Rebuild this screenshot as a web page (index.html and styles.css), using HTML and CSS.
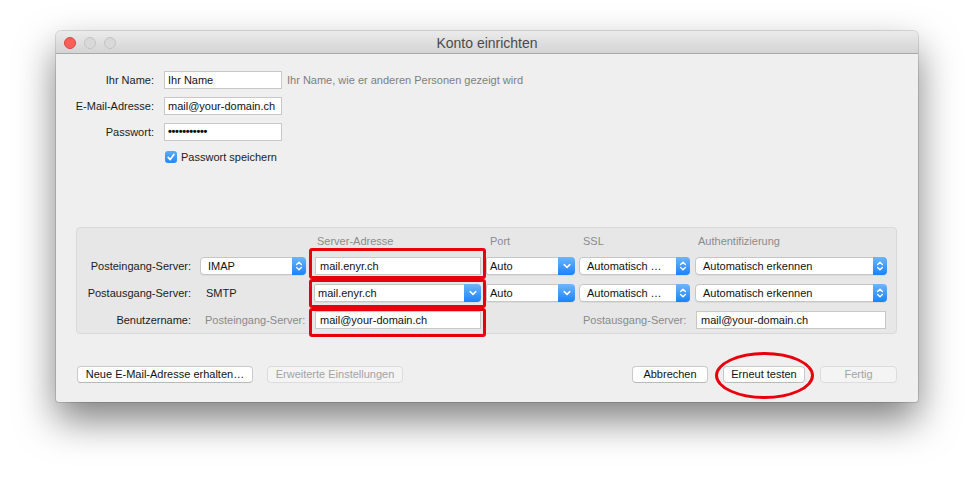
FILE: index.html
```html
<!DOCTYPE html>
<html lang="de">
<head>
<meta charset="utf-8">
<title>Konto einrichten</title>
<link rel="stylesheet" href="styles.css">
</head>
<body>
<div class="window">
  <div class="titlebar">
    <div class="lights"><span class="light close"></span><span class="light"></span><span class="light"></span></div>
    <div class="title">Konto einrichten</div>
  </div>
  <div class="content">
    <div class="account">
      <div class="lbl">Ihr Name:</div><div class="field">Ihr Name</div><div class="hint">Ihr Name, wie er anderen Personen gezeigt wird</div>
      <div class="lbl">E-Mail-Adresse:</div><div class="field">mail@your-domain.ch</div><div></div>
      <div class="lbl">Passwort:</div><div class="field pw">•••••••••••</div><div></div>
      <div></div>
      <div class="check"><span class="box"><svg viewBox="0 0 12 12" width="12" height="12"><path d="M3.2 6.4 L5.2 8.6 L8.9 3.4" fill="none" stroke="#fff" stroke-width="1.7" stroke-linecap="round" stroke-linejoin="round"/></svg></span>Passwort speichern</div>
      <div></div>
    </div>

    <div class="servers">
      <div class="grid">
        <div></div><div></div>
        <div class="head c3">Server-Adresse</div>
        <div class="head c4">Port</div>
        <div class="head c5">SSL</div>
        <div class="head c6">Authentifizierung</div>

        <div class="rlbl">Posteingang-Server:</div>
        <div class="popup proto"><span class="pv">IMAP</span><span class="pb"><svg viewBox="0 0 8 12" width="8" height="12"><path d="M1.6 4.6 L4 2.2 L6.4 4.6 M1.6 7.4 L4 9.8 L6.4 7.4" fill="none" stroke="#fff" stroke-width="1.4" stroke-linecap="round" stroke-linejoin="round"/></svg></span></div>
        <div class="tfield server">mail.enyr.ch</div>
        <div class="combo port"><span class="pv">Auto</span><span class="cb"><svg viewBox="0 0 10 8" width="10" height="8"><path d="M2.2 2.6 L5 5.4 L7.8 2.6" fill="none" stroke="#fff" stroke-width="1.5" stroke-linecap="round" stroke-linejoin="round"/></svg></span></div>
        <div class="popup ssl"><span class="pv">Automatisch …</span><span class="pb"><svg viewBox="0 0 8 12" width="8" height="12"><path d="M1.6 4.6 L4 2.2 L6.4 4.6 M1.6 7.4 L4 9.8 L6.4 7.4" fill="none" stroke="#fff" stroke-width="1.4" stroke-linecap="round" stroke-linejoin="round"/></svg></span></div>
        <div class="popup auth"><span class="pv">Automatisch erkennen</span><span class="pb"><svg viewBox="0 0 8 12" width="8" height="12"><path d="M1.6 4.6 L4 2.2 L6.4 4.6 M1.6 7.4 L4 9.8 L6.4 7.4" fill="none" stroke="#fff" stroke-width="1.4" stroke-linecap="round" stroke-linejoin="round"/></svg></span></div>

        <div class="rlbl">Postausgang-Server:</div>
        <div class="plain">SMTP</div>
        <div class="combo server"><span class="pv">mail.enyr.ch</span><span class="cb"><svg viewBox="0 0 10 8" width="10" height="8"><path d="M2.2 2.6 L5 5.4 L7.8 2.6" fill="none" stroke="#fff" stroke-width="1.5" stroke-linecap="round" stroke-linejoin="round"/></svg></span></div>
        <div class="combo port"><span class="pv">Auto</span><span class="cb"><svg viewBox="0 0 10 8" width="10" height="8"><path d="M2.2 2.6 L5 5.4 L7.8 2.6" fill="none" stroke="#fff" stroke-width="1.5" stroke-linecap="round" stroke-linejoin="round"/></svg></span></div>
        <div class="popup ssl"><span class="pv">Automatisch …</span><span class="pb"><svg viewBox="0 0 8 12" width="8" height="12"><path d="M1.6 4.6 L4 2.2 L6.4 4.6 M1.6 7.4 L4 9.8 L6.4 7.4" fill="none" stroke="#fff" stroke-width="1.4" stroke-linecap="round" stroke-linejoin="round"/></svg></span></div>
        <div class="popup auth"><span class="pv">Automatisch erkennen</span><span class="pb"><svg viewBox="0 0 8 12" width="8" height="12"><path d="M1.6 4.6 L4 2.2 L6.4 4.6 M1.6 7.4 L4 9.8 L6.4 7.4" fill="none" stroke="#fff" stroke-width="1.4" stroke-linecap="round" stroke-linejoin="round"/></svg></span></div>

        <div class="rlbl">Benutzername:</div>
        <div class="plain gray">Posteingang-Server:</div>
        <div class="tfield server">mail@your-domain.ch</div>
        <div></div>
        <div class="plain gray out">Postausgang-Server:</div>
        <div class="tfield user2">mail@your-domain.ch</div>
      </div>
      <div class="mark m1"></div>
      <div class="mark m2"></div>
      <div class="mark m3"></div>
    </div>

    <div class="buttons">
      <div class="bgroup">
        <div class="btn b-new">Neue E-Mail-Adresse erhalten…</div>
        <div class="btn dis b-adv">Erweiterte Einstellungen</div>
      </div>
      <div class="bgroup">
        <div class="btn b-cancel">Abbrechen</div>
        <div class="btn b-test">Erneut testen</div>
        <div class="btn dis b-done">Fertig</div>
      </div>
    </div>
  </div>
  <div class="ellipse"></div>
</div>
</body>
</html>
```

FILE: styles.css
```css
* { box-sizing: border-box; }
html, body { margin: 0; padding: 0; background: #ffffff; }
body {
  font-family: "Liberation Sans", Arial, sans-serif;
  font-size: 11px;
  color: #1b1b1b;
  width: 974px;
  height: 482px;
  overflow: hidden;
}

.window {
  position: relative;
  margin: 31px 0 0 56px;
  width: 862px;
  height: 371px;
  background: #efefef;
  border-radius: 5px 5px 3px 3px;
  box-shadow: 0 0 0 1px rgba(0,0,0,0.13), 0 18px 38px rgba(0,0,0,0.5);
}

.titlebar {
  position: relative;
  height: 23px;
  border-radius: 5px 5px 0 0;
  background: linear-gradient(#ebebeb, #d4d4d4);
  border-bottom: 1px solid #a8a8a8;
  display: flex;
  align-items: center;
  justify-content: center;
}
.lights {
  position: absolute;
  left: 8px;
  top: 6px;
  display: flex;
  gap: 8px;
}
.light {
  width: 12px;
  height: 12px;
  border-radius: 50%;
  background: #d9d9d9;
  border: 1px solid #c4c4c4;
}
.light.close { background: #fc5f57; border-color: #df443f; }
.title {
  font-size: 14px;
  color: #4a4a4a;
  line-height: 16px;
  margin-top: 1px;
}

.content {
  padding: 17px 21px 0 0;
}

.account {
  display: grid;
  grid-template-columns: 108px 118px 1fr;
  grid-template-rows: 18px 18px 18px 16px;
  row-gap: 8px;
  align-items: center;
}
.lbl { text-align: right; padding-right: 10px; color: #1b1b1b; }
.field {
  height: 18px;
  background: #fff;
  border: 1px solid #c8c8c8;
  padding: 0 3px;
  line-height: 16px;
  color: #111;
  white-space: nowrap;
  overflow: hidden;
}
.field.pw { font-size: 11px; letter-spacing: -0.3px; line-height: 15px; font-weight: bold; }
.hint { padding-left: 5px; color: #7e7e7e; }
.check { display: flex; align-items: center; gap: 4px; padding-left: 1px; }
.box {
  width: 12px;
  height: 12px;
  border-radius: 3px;
  background: linear-gradient(#5aaaff, #2288fb);
  display: flex;
}

.servers {
  position: relative;
  margin: 62px 0 0 20px;
  width: 821px;
  height: 107px;
  background: #e7e7e7;
  border: 1px solid #d9d9d9;
  border-radius: 4px;
  padding-top: 6px;
}
.grid {
  display: grid;
  grid-template-columns: 120px 112px 177px 92px 115px 203px;
  grid-template-rows: 14px 19px 19px 19px;
  row-gap: 8px;
  align-items: center;
}
.head { color: #8b8b8b; line-height: 14px; }
.c3 { padding-left: 8px; }
.c4 { padding-left: 4px; }
.c5 { padding-left: 5px; }
.c6 { padding-left: 5px; }
.rlbl { text-align: right; padding-right: 6px; white-space: nowrap; }
.plain { padding-left: 9px; white-space: nowrap; }
.plain.gray { color: #8a8a8a; padding-left: 8px; }
.plain.out { padding-left: 5px; }

.popup, .combo {
  display: flex;
  height: 18px;
  background: #fff;
  border: 1px solid #c6c6c6;
  border-radius: 4px;
  box-shadow: 0 1px 0 rgba(0,0,0,0.05);
  line-height: 16px;
  white-space: nowrap;
}
.pv { flex: 1; padding-left: 7px; overflow: hidden; color: #111; }
.combo .pv { padding-left: 3px; }
.pb, .cb {
  margin: -1px -1px -1px 0;
  border-radius: 0 4px 4px 0;
  background: linear-gradient(#6db6fb, #1a83fc);
  display: flex;
  align-items: center;
  justify-content: center;
}
.pb { width: 14px; }
.cb { width: 17px; }
.combo { border-radius: 2px 4px 4px 2px; }

.proto { margin-left: 3px; width: 106px; }
.server { margin-left: 5px; width: 167px; }
.port { width: 89px; }
.ssl { margin-left: 1px; width: 111px; }
.auth { margin-left: 2px; width: 192px; }

.tfield {
  height: 18px;
  background: #fff;
  border: 1px solid #c8c8c8;
  padding: 0 4px;
  line-height: 16px;
  color: #111;
  white-space: nowrap;
}
.tfield.server { width: 166px; margin-left: 6px; }
.user2 { margin-left: 3px; width: 190px; padding-left: 4px; }

.mark {
  position: absolute;
  left: 232px;
  width: 177px;
  border: 3px solid #e8000c;
  border-radius: 3px;
}
.m1 { top: 20px; height: 31px; }
.m2 { top: 51px; height: 29px; }
.m3 { top: 80px; height: 29px; }

.buttons {
  margin: 32px 0 0 21px;
  display: flex;
  justify-content: space-between;
}
.bgroup { display: flex; gap: 14px; }
.bgroup + .bgroup { gap: 15px; }
.btn {
  height: 17px;
  line-height: 15px;
  text-align: center;
  background: #fff;
  border: 1px solid #c9c9c9;
  border-bottom-color: #b9b9b9;
  border-radius: 4px;
  color: #111;
  white-space: nowrap;
}
.btn.dis { background: #f4f4f4; color: #a3a3a3; border-color: #dcdcdc; }
.b-new { width: 176px; }
.b-adv { width: 136px; }
.b-cancel { width: 76px; }
.b-test { width: 82px; }
.b-done { width: 77px; }

.ellipse {
  position: absolute;
  left: 659px;
  top: 321px;
  width: 99px;
  height: 47px;
  border: 3px solid #e8000c;
  border-radius: 50%;
}
```
